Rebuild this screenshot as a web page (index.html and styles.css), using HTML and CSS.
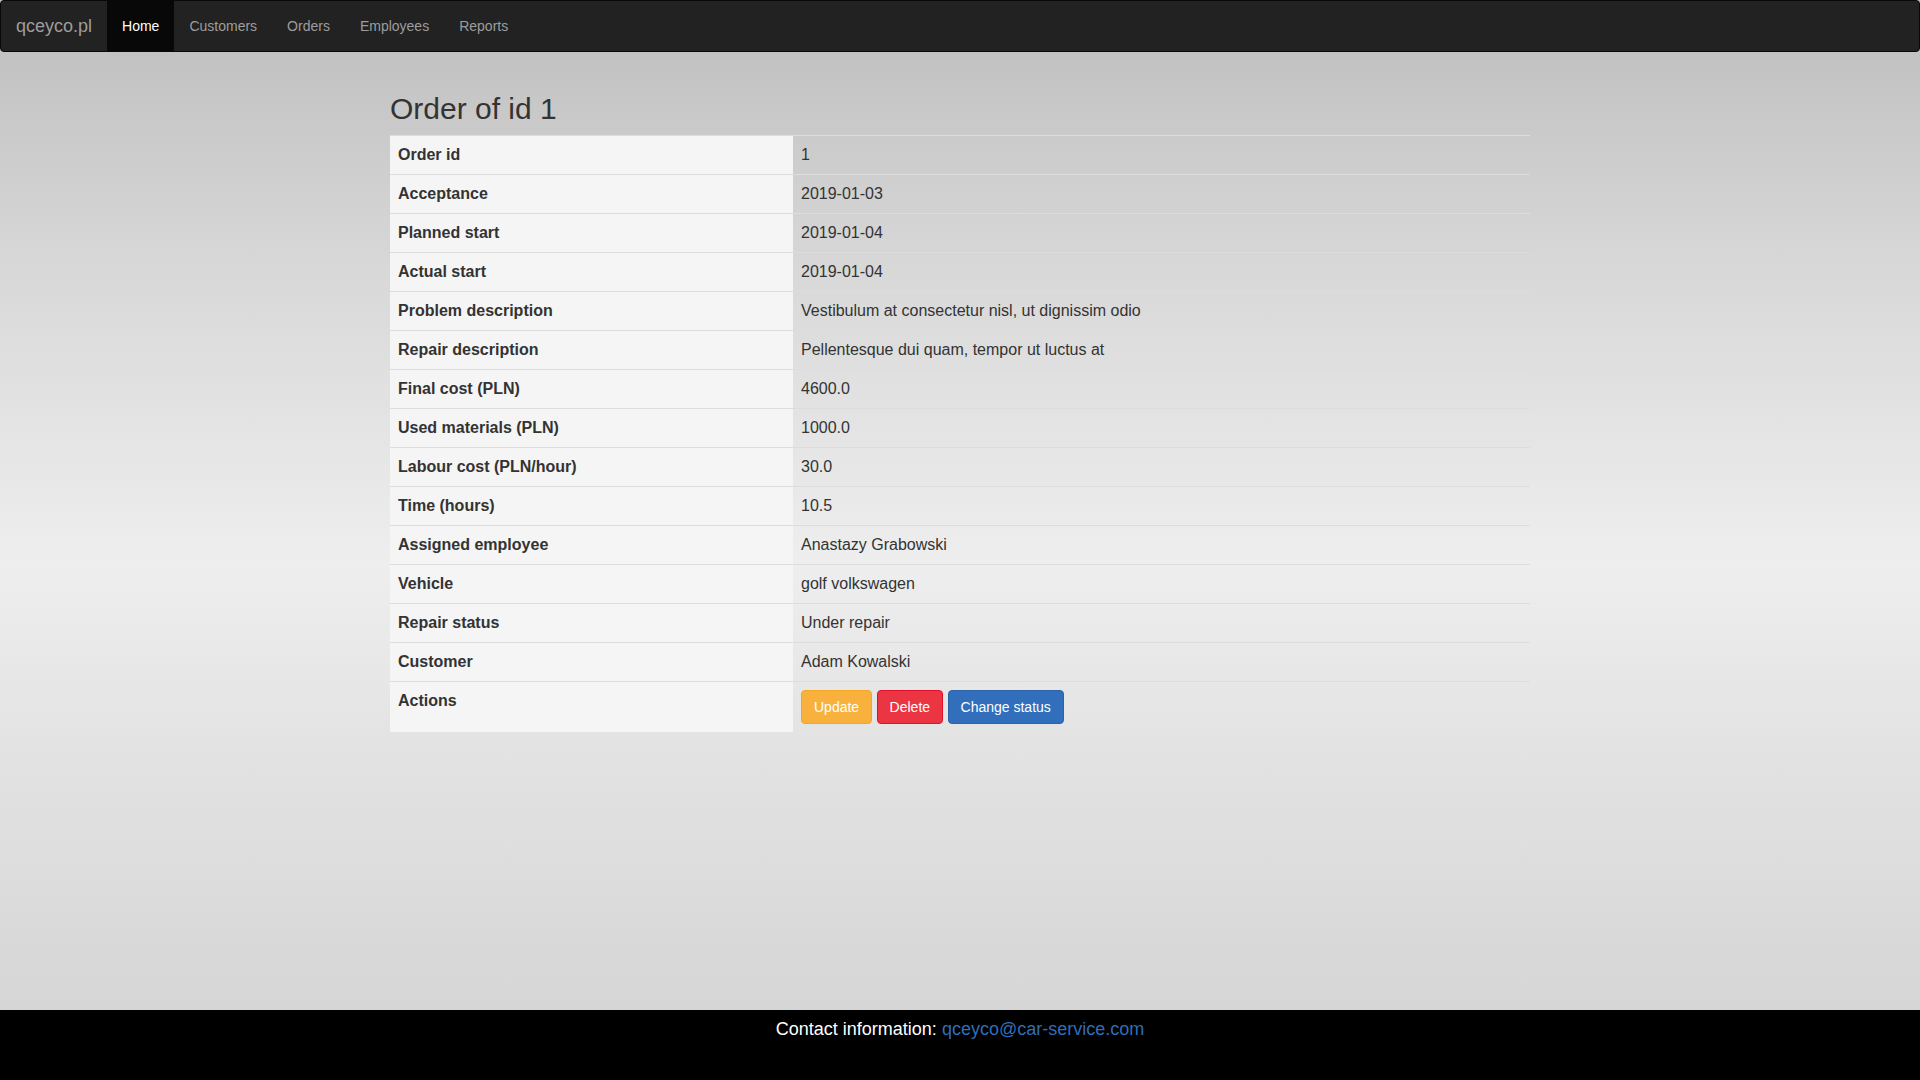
FILE: index.html
```html
<!DOCTYPE html>
<html lang="en">
<head>
<meta charset="utf-8">
<meta name="viewport" content="width=device-width, initial-scale=1">
<title>Order of id 1</title>
<link rel="stylesheet" href="styles.css">
</head>
<body>
<nav class="navbar">
  <a class="navbar-brand" href="#">qceyco.pl</a>
  <ul class="navbar-nav">
    <li><a class="nav-link active" href="#">Home</a></li>
    <li><a class="nav-link" href="#">Customers</a></li>
    <li><a class="nav-link" href="#">Orders</a></li>
    <li><a class="nav-link" href="#">Employees</a></li>
    <li><a class="nav-link" href="#">Reports</a></li>
  </ul>
</nav>
<main class="container">
  <h2 class="title">Order of id 1</h2>
  <table class="details">
    <tbody>
      <tr><th scope="row">Order id</th><td>1</td></tr>
      <tr><th scope="row">Acceptance</th><td>2019-01-03</td></tr>
      <tr><th scope="row">Planned start</th><td>2019-01-04</td></tr>
      <tr><th scope="row">Actual start</th><td>2019-01-04</td></tr>
      <tr><th scope="row">Problem description</th><td>Vestibulum at consectetur nisl, ut dignissim odio</td></tr>
      <tr><th scope="row">Repair description</th><td>Pellentesque dui quam, tempor ut luctus at</td></tr>
      <tr><th scope="row">Final cost (PLN)</th><td>4600.0</td></tr>
      <tr><th scope="row">Used materials (PLN)</th><td>1000.0</td></tr>
      <tr><th scope="row">Labour cost (PLN/hour)</th><td>30.0</td></tr>
      <tr><th scope="row">Time (hours)</th><td>10.5</td></tr>
      <tr><th scope="row">Assigned employee</th><td>Anastazy Grabowski</td></tr>
      <tr><th scope="row">Vehicle</th><td>golf volkswagen</td></tr>
      <tr><th scope="row">Repair status</th><td>Under repair</td></tr>
      <tr><th scope="row">Customer</th><td>Adam Kowalski</td></tr>
      <tr>
        <th scope="row">Actions</th>
        <td>
          <button type="button" class="btn btn-warning">Update</button>
          <button type="button" class="btn btn-danger">Delete</button>
          <button type="button" class="btn btn-primary">Change status</button>
        </td>
      </tr>
    </tbody>
  </table>
</main>
<footer class="footer">Contact information: <a href="mailto:qceyco@car-service.com">qceyco@car-service.com</a></footer>
</body>
</html>
```
FILE: styles.css
```css
* {
  box-sizing: border-box;
}

body {
  display: flex;
  flex-direction: column;
  min-height: 100vh;
  margin: 0;
  font-family: "Helvetica Neue", Helvetica, "Liberation Sans", Arial, sans-serif;
  font-size: 14px;
  line-height: 20px;
  color: #333;
  background: linear-gradient(to bottom, #bdbdbd 0%, #d8d8d8 25%, #eee 52%, #e3e3e3 69%, #d2d2d2 100%);
}

.navbar {
  display: flex;
  margin-bottom: 20px;
  background: #222;
  border: 1px solid #080808;
  border-radius: 4px;
}

.navbar-brand,
.nav-link {
  display: block;
  padding: 15px;
  color: #9d9d9d;
  text-decoration: none;
}

.navbar-brand {
  font-size: 18px;
}

.navbar-nav {
  display: flex;
  margin: 0;
  padding: 0;
  list-style: none;
}

.nav-link.active {
  color: #fff;
  background: #080808;
}

.container {
  flex: 1;
  width: 100%;
  max-width: 1170px;
  margin: 0 auto;
  padding: 0 15px;
}

.title {
  margin: 20px 0 10px;
  font-size: 30px;
  font-weight: 500;
  line-height: 33px;
}

.details {
  width: 100%;
  margin-bottom: 20px;
  border-spacing: 0;
  table-layout: fixed;
  font-size: 16px;
  line-height: 22px;
}

.details th,
.details td {
  padding: 8px;
  border-top: 1px solid #ddd;
  text-align: left;
  vertical-align: top;
}

.details th {
  width: 403px;
  background-color: #f5f5f5;
}

.btn {
  display: inline-block;
  margin: 0;
  padding: 6px 12px;
  border: 1px solid transparent;
  border-radius: 4px;
  font-family: inherit;
  font-size: 14px;
  line-height: 20px;
  color: #fff;
  vertical-align: middle;
  cursor: pointer;
}

.btn-warning {
  background: #f8b13c;
  border-color: #f5a623;
}

.btn-danger {
  background: #eb3543;
  border-color: #e0102c;
}

.btn-primary {
  background: #316ebb;
  border-color: #2b62a8;
}

.footer {
  min-height: 70px;
  padding: 6px 15px;
  background: #000;
  color: #fff;
  font-size: 18px;
  line-height: 26px;
  text-align: center;
}

.footer a {
  color: #2f6eba;
  text-decoration: none;
}
```
